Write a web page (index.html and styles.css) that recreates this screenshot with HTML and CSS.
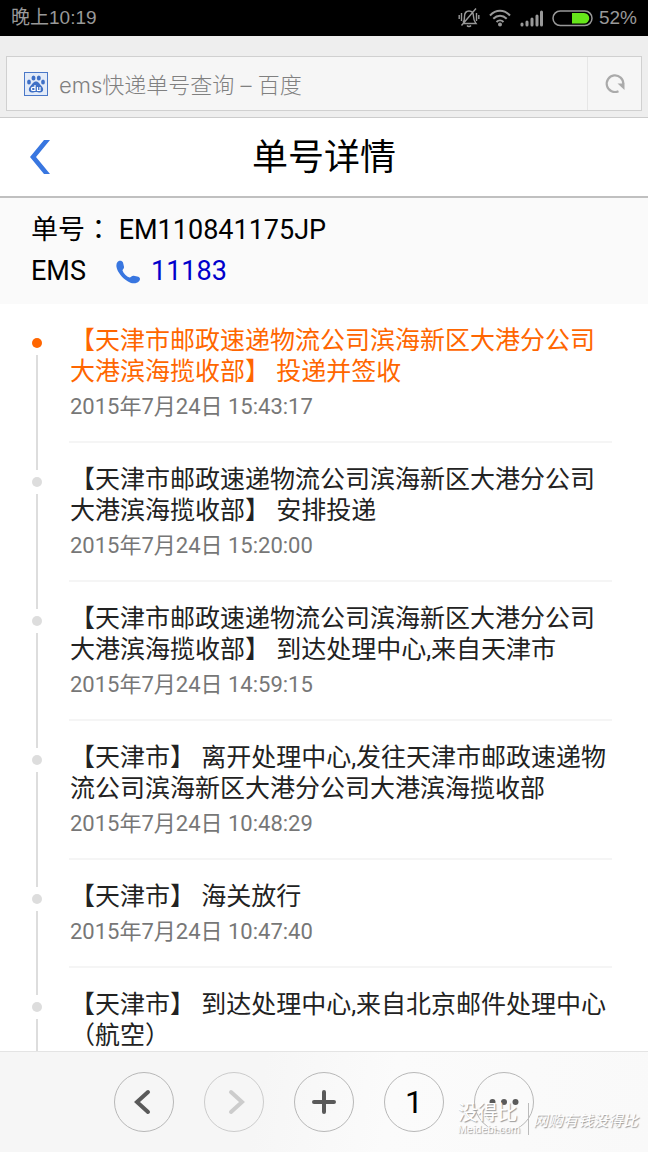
FILE: index.html
```html
<!DOCTYPE html>
<html lang="zh-CN">
<head>
  <meta charset="UTF-8" />
  <meta name="viewport" content="width=device-width, initial-scale=1.0"/>
  <title>ems快递单号查询 – 百度</title>
  <link rel="stylesheet" href="styles.css">
</head>
<body>
  <!-- Status bar -->
  <div class="status-bar">
    <span>晚上10:19</span>
    <div class="status-icons">
      <svg width="22" height="20" viewBox="0 0 22 20" fill="none" stroke="#999" stroke-width="1.4">
        <path d="M5 14.500C6.500 13 6.500 11 6.500 8.500C6.500 5 8.500 3 11 3S15.500 5 15.500 8.500C15.500 11 16 13 18 15.500H5.500M9 17.500c1 1.300 3 1.300 4 0M18 .500 3.500 17.500"/>
        <path d="M3.500 5v8M1.200 7v4M18.500 5v8M20.800 7v4"/>
      </svg>
      <svg width="22" height="18" viewBox="0 0 22 18" fill="none" stroke="#999" stroke-width="2">
        <path d="M1 6.500C7 .300 15 .300 21 6.500M4.300 9.800c4-4 9.400-4 13.400 0M7.500 13c2-2 5-2 7 0"/>
        <circle cx="11" cy="15.500" r="2" fill="#999" stroke="none"/>
      </svg>
      <svg width="23" height="17" viewBox="0 0 23 17" stroke="#999" stroke-width="3" stroke-linecap="round">
        <path d="M2 14v1M7 12v3M12 9v6M17 6v9M21.500 2v13"/>
      </svg>
      <svg width="42" height="17" viewBox="0 0 42 17">
        <rect x="1" y="1" width="39" height="14.500" rx="7.200" fill="none" stroke="#999" stroke-width="1.500"/>
        <path d="M20 3h12a5.200 5.200 0 0 1 0 10.500H20z" fill="#66e61a"/>
      </svg>
      <span>52%</span>
    </div>
  </div>

  <!-- Address bar -->
  <div class="toolbar">
    <form class="address-box">
      <svg class="favicon" width="24" height="24" viewBox="0 0 24 24">
        <rect x=".500" y=".500" width="23" height="23" fill="#e3ebf8" stroke="#4a78c8"/>
        <g fill="#3f70c6">
          <ellipse cx="9.500" cy="6" rx="2" ry="2.600"/>
          <ellipse cx="14.800" cy="6" rx="2" ry="2.600"/>
          <ellipse cx="5" cy="10" rx="1.900" ry="2.500"/>
          <ellipse cx="19" cy="10" rx="1.900" ry="2.500"/>
          <path d="M12 9.500c2.800 0 3.500 2.500 5.500 4.500 3 3 1.500 6.500-1.500 6.500-1.500 0-2.500-.500-4-.500s-2.500.500-4 .500c-3 0-4.500-3.500-1.500-6.500 2-2 2.700-4.500 5.500-4.500z"/>
        </g>
        <path d="M11 13v5.500H9a1.600 1.600 0 0 1 0-3.200h2M13.500 15v3.500H16V15" fill="none" stroke="#fff" stroke-width="1.200"/>
      </svg>
      <input type="text" class="address" aria-label="地址" value="ems快递单号查询 – 百度">
      <button type="button" class="reload" aria-label="刷新">
        <svg width="22" height="22" viewBox="0 0 22 22">
          <path d="M14.500 18.200A8.300 8.300 0 1 1 19.300 11" fill="none" stroke="#aaa" stroke-width="2.200"/>
          <path d="M13.500 10.500H20.500V17z" fill="#aaa"/>
        </svg>
      </button>
    </form>
  </div>

  <!-- Page header -->
  <header>
    <a href="#" class="back" aria-label="返回">
      <svg width="20" height="34" viewBox="0 0 20 34">
        <path d="M14 0h6L6 17l14 17h-6L0 17z" fill="#3876e0"/>
      </svg>
    </a>
    <h1>单号详情</h1>
  </header>

  <section class="info">
    <p>单号<span class="centered" lang="zh-TW">：</span> EM110841175JP</p>
    <p class="carrier">
      <span>EMS</span>
      <a href="tel:11183">
        <svg width="24" height="24" viewBox="0 0 24 24">
          <path d="M1.500 2C3 .200 6 .200 7 2.500l1 4.300C8.300 8.500 6.500 9 6.500 10.500c1 3 4 6 7 7 1.500 0 2.500-2 4.300-1.700l4.500 1c2 .700 2.200 3 .700 4.500C20.500 24 16 24 12 21.500 6 18 1.500 12 .500 7 .200 5 .500 3.200 1.500 2z" fill="#3876e0"/>
        </svg>
        11183
      </a>
    </p>
  </section>

  <!-- Tracking records -->
  <main>
    <ul class="timeline">
      <li class="current">
        <div class="record">
          <p>【天津市邮政速递物流公司滨海新区大港分公司大港滨海揽收部】 投递并签收</p>
          <time>2015年7月24日 15:43:17</time>
        </div>
      </li>
      <li>
        <div class="record">
          <p>【天津市邮政速递物流公司滨海新区大港分公司大港滨海揽收部】 安排投递</p>
          <time>2015年7月24日 15:20:00</time>
        </div>
      </li>
      <li>
        <div class="record">
          <p>【天津市邮政速递物流公司滨海新区大港分公司大港滨海揽收部】 到达处理中心,来自天津市</p>
          <time>2015年7月24日 14:59:15</time>
        </div>
      </li>
      <li>
        <div class="record">
          <p>【天津市】 离开处理中心,发往天津市邮政速递物流公司滨海新区大港分公司大港滨海揽收部</p>
          <time>2015年7月24日 10:48:29</time>
        </div>
      </li>
      <li>
        <div class="record">
          <p>【天津市】 海关放行</p>
          <time>2015年7月24日 10:47:40</time>
        </div>
      </li>
      <li>
        <div class="record">
          <p>【天津市】 到达处理中心,来自北京邮件处理中心<span class="centered" lang="zh-TW">（航空）</span></p>
        </div>
      </li>
    </ul>
  </main>

  <!-- Browser controls -->
  <footer>
    <nav>
      <button aria-label="后退">
        <svg width="30" height="30" viewBox="0 0 30 30"><path d="M19 5 8 15l11 10"/></svg>
      </button>
      <button aria-label="前进" disabled>
        <svg width="30" height="30" viewBox="0 0 30 30"><path d="M12 5l11 10-11 10"/></svg>
      </button>
      <button aria-label="新建">
        <svg width="30" height="30" viewBox="0 0 30 30"><path d="M15 5v20M5 15h20"/></svg>
      </button>
      <button class="tabs">1</button>
      <button aria-label="更多">
        <svg class="dots" width="30" height="30" viewBox="0 0 30 30"><circle cx="3.500" cy="15" r="3"/><circle cx="15" cy="15" r="3"/><circle cx="26.500" cy="15" r="3"/></svg>
      </button>
    </nav>
    <div class="watermark">
      <div class="brand">
        <span class="brand-name">没得比</span>
        <span class="brand-site">Meidebi.com</span>
      </div>
      <span class="slogan">网购有钱没得比</span>
    </div>
  </footer>
</body>
</html>
```
FILE: styles.css
```css
* {
  margin: 0;
  padding: 0;
  box-sizing: border-box;
}

body {
  display: flex;
  flex-direction: column;
  height: 100vh;
  overflow: hidden;
  background-color: #fff;
  color: #000;
  font-family: Roboto, "Noto Sans CJK SC", sans-serif;
}

svg {
  display: block;
}

button {
  border: none;
  background: none;
  cursor: pointer;
}

.status-bar {
  display: flex;
  flex-shrink: 0;
  justify-content: space-between;
  align-items: center;
  height: 36px;
  padding: 0 11px;
  background-color: #000;
  color: #999;
  font-family: "Liberation Sans", "Noto Sans CJK SC", sans-serif;
  font-size: 19px;
  line-height: 36px;
}

.status-icons {
  display: flex;
  align-items: center;
  gap: 9px;
}

.status-icons span {
  margin-left: -4px;
}

.toolbar {
  flex-shrink: 0;
  padding: 20px 6px 6px;
  background-color: #eee;
  border-bottom: 1px solid #ccc;
}

.address-box {
  display: flex;
  align-items: center;
  height: 55px;
  padding-left: 17px;
  background-color: #f6f6f6;
  border: 1px solid #d0d0d0;
}

.favicon {
  flex-shrink: 0;
}

.address {
  flex: 1;
  min-width: 0;
  margin-left: 11px;
  padding-bottom: 2px;
  border: none;
  outline: none;
  background: none;
  color: #808080;
  font-family: Inter, "Noto Sans CJK SC", sans-serif;
  font-size: 22px;
  font-weight: 300;
}

.reload {
  display: flex;
  align-items: center;
  justify-content: center;
  width: 54px;
  height: 100%;
  border-left: 1px solid #e6e6e6;
}

header {
  display: grid;
  grid-template-columns: 1fr auto 1fr;
  align-items: center;
  flex-shrink: 0;
  height: 80px;
  border-bottom: 2px solid #c0c0c0;
}

.back {
  justify-self: start;
  padding-left: 30px;
}

h1 {
  padding-top: 2px;
  font-size: 36px;
  font-weight: 400;
  line-height: 76px;
}

.info {
  flex-shrink: 0;
  padding: 12px 31px;
  background-color: #fafafa;
  font-size: 27px;
  line-height: 41px;
}

.carrier,
.carrier a {
  display: flex;
  align-items: center;
}

.carrier {
  gap: 30px;
}

.carrier a {
  gap: 11px;
  color: #0000cc;
  text-decoration: none;
}

/* full-width punctuation set in the middle of its square */
.centered {
  font-family: Roboto, "Noto Sans CJK TC", sans-serif;
}

main {
  flex: 1;
  min-height: 0;
  overflow: hidden;
}

.timeline {
  padding: 0 36px 0 31px;
  list-style: none;
}

.timeline li {
  position: relative;
  padding-left: 38px;
}

/* line between two dots */
.timeline li::before {
  content: "";
  position: absolute;
  top: 51px;
  bottom: -27px;
  left: 5px;
  width: 2px;
  background-color: #ddd;
}

.timeline li::after {
  content: "";
  position: absolute;
  top: 34px;
  left: 1px;
  width: 10px;
  height: 10px;
  border-radius: 50%;
  background-color: #ddd;
}

.record {
  padding: 21px 0 19px 1px;
  border-bottom: 2px solid #f5f5f5;
  color: #222;
}

.record p {
  font-size: 25px;
  line-height: 31px;
}

.record time {
  display: block;
  margin-top: 4px;
  color: #777;
  font-size: 22px;
  line-height: 31px;
}

.timeline .current::after {
  background-color: #ff6600;
}

.current .record p {
  color: #ff6600;
}

footer {
  position: relative;
  flex-shrink: 0;
  height: 101px;
  padding-top: 20px;
  border-top: 1px solid #e4e4e4;
  background: linear-gradient(100deg, #f6f6f6, #f6f6f6 40%, #fbfbfb 60%, #f9f9f9);
}

nav {
  display: flex;
  justify-content: center;
  gap: 30px;
}

nav button {
  display: flex;
  align-items: center;
  justify-content: center;
  width: 60px;
  height: 60px;
  border: 1px solid #b8b8b8;
  border-radius: 50%;
}

nav button:disabled {
  border-color: #ccc;
}

nav svg {
  fill: none;
  stroke: #5a5a5a;
  stroke-width: 4;
  stroke-linecap: round;
}

nav button:disabled svg {
  stroke: #ccc;
}

nav .dots {
  fill: #5a5a5a;
  stroke: none;
}

.tabs {
  color: #000;
  font-family: Roboto, sans-serif;
  font-size: 32px;
}

.watermark {
  position: absolute;
  right: 10px;
  bottom: 17px;
  display: flex;
  align-items: center;
  color: #fff;
  font-family: "Liberation Sans", "Noto Sans CJK SC", sans-serif;
  text-shadow: 1px 1px 1px #999;
}

.brand {
  display: flex;
  flex-direction: column;
  padding-right: 8px;
  border-right: 1px solid #bbb;
}

.brand-name {
  font-size: 20px;
  line-height: 20px;
}

.brand-site {
  font-size: 11px;
  line-height: 12px;
}

.slogan {
  padding-left: 4px;
  font-size: 15px;
  font-style: italic;
}
```
